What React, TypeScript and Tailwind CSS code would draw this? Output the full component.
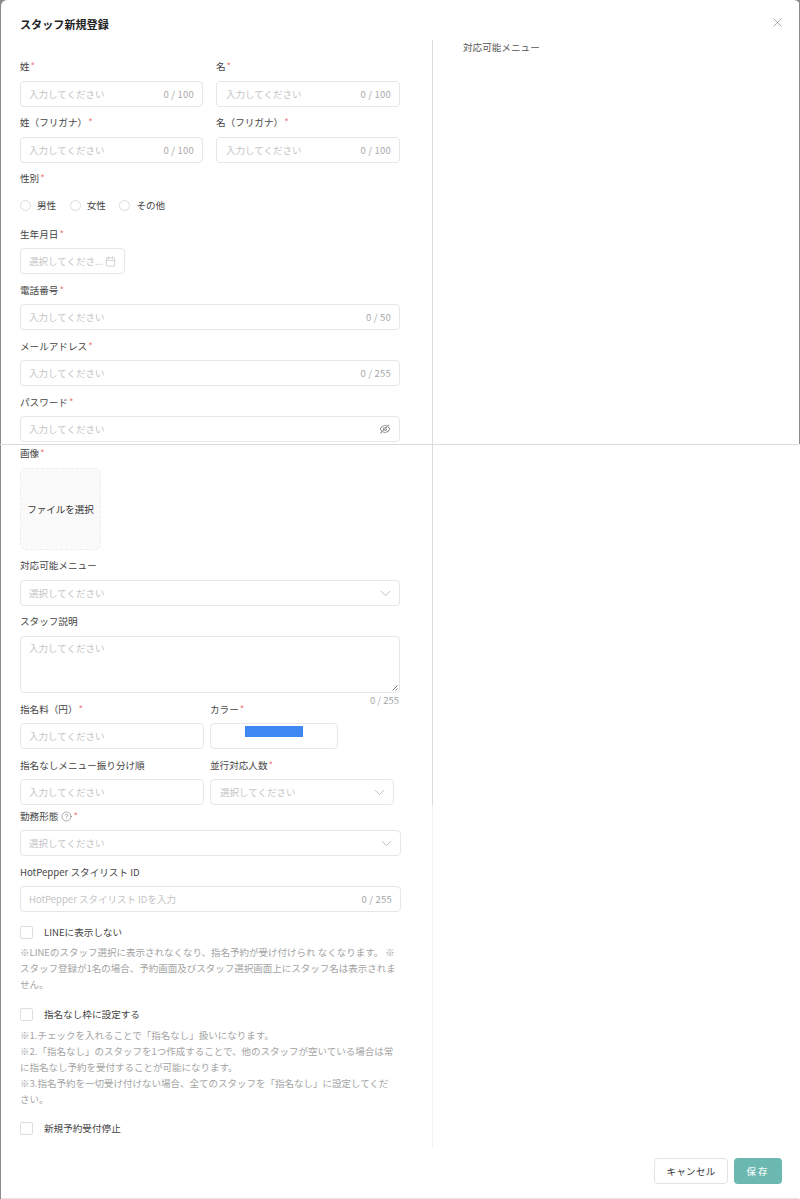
import { Calendar, ChevronDown, CircleHelp, X } from "lucide-react"
import { AiOutlineEyeInvisible } from "react-icons/ai"
import type { ReactNode } from "react"

const labelClass = "flex h-5 items-center text-[9.6px] text-[#444]"
const boxClass = "flex h-[26px] items-center rounded-[4px] border border-[#e6e6e6] bg-white pl-[8px] pr-2 text-[9.5px]"
const placeholderClass = "text-[#c4c4c4]"
const helpClass = "text-[9.5px] leading-[16px] text-[#a3a3a3]"

function Star() {
    return <span className="ml-px text-[#f28080]">*</span>
}

function Label({ text, required }: { text: ReactNode; required?: boolean }) {
    return (
        <div className={labelClass}>
            {text}
            {required && <Star />}
        </div>
    )
}

function TextBox({ placeholder = "入力してください", count, right, className = "" }: {
    placeholder?: string
    count?: string
    right?: ReactNode
    className?: string
}) {
    return (
        <div className={`${boxClass} ${className}`}>
            <span className={`truncate ${placeholderClass}`}>{placeholder}</span>
            {count && <span className="ml-auto tracking-[0.2px] text-[#a8a8a8]">{count}</span>}
            {right && <span className="ml-auto flex items-center text-[#adadad]">{right}</span>}
        </div>
    )
}

function Field({ label, required, className = "", boxClassName = "", ...box }: {
    label: ReactNode
    required?: boolean
    className?: string
    boxClassName?: string
    placeholder?: string
    count?: string
    right?: ReactNode
}) {
    return (
        <div className={`mb-[5px] ${className}`}>
            <Label text={label} required={required} />
            <TextBox {...box} className={`mt-[5px] ${boxClassName}`} />
        </div>
    )
}

function Radio({ text }: { text: string }) {
    return (
        <div className="flex items-center gap-[6px] text-[9.6px] text-[#444]">
            <span className="h-[11px] w-[11px] rounded-full border border-[#dcdcdc]" />
            {text}
        </div>
    )
}

function Check({ text, className = "" }: { text: string; className?: string }) {
    return (
        <div className={`flex h-[14px] items-center text-[9.6px] text-[#444] ${className}`}>
            <span className="mr-[11px] h-[13px] w-[13px] rounded-[2px] border border-[#dedede]" />
            {text}
        </div>
    )
}

const selectIcon = <ChevronDown size={17} strokeWidth={1.1} className="-mr-[3px]" />

export default function App() {
    return (
        <div className="relative h-[1199px] w-[800px] overflow-hidden bg-[#8a8a8a] pl-px font-['Noto_Sans_CJK_JP',sans-serif]">
            <div className="flex h-full flex-col rounded-t-[6px] border-b border-[#e5e5e5] bg-white">
                <div className="flex h-10 shrink-0 items-start justify-between pl-[19px] pr-[15px] pt-[15px]">
                    <h2 className="text-[11.1px] font-bold leading-[18px] text-[#222]">スタッフ新規登録</h2>
                    <X size={15} strokeWidth={1.1} className="text-[#808080]" />
                </div>

                <div className="flex flex-1">
                    {/* form column */}
                    <div className="h-[1108px] w-[432px] shrink-0 border-r border-[#f2f2f2] pl-[19px] pt-4">
                        <div className="w-[381px]">
                            <div className="grid grid-cols-[183px_184px] gap-x-[13px]">
                                <Field label="姓" required count="0 / 100" />
                                <Field label="名" required count="0 / 100" boxClassName="!pl-[9px]" />
                                <Field label="姓（フリガナ）" required count="0 / 100" />
                                <Field label="名（フリガナ）" required count="0 / 100" boxClassName="!pl-[9px]" />
                            </div>

                            <Label text="性別" required />
                            <div className="mb-[13px] mt-[11px] flex h-[12px] items-center gap-[13.5px]">
                                <Radio text="男性" />
                                <Radio text="女性" />
                                <Radio text="その他" />
                            </div>

                            <Field
                                label="生年月日"
                                required
                                placeholder="選択してくださ..."
                                right={<Calendar size={11} strokeWidth={1.1} />}
                                boxClassName="!mt-1 w-[105px] !pr-[8px]"
                                className="!mb-[6px]"
                            />
                            <Field label="電話番号" required count="0 / 50" boxClassName="!mt-1 w-[380px]" className="!mb-[6px]" />
                            <Field label="メールアドレス" required count="0 / 255" boxClassName="!mt-1 w-[380px]" className="!mb-[6px]" />
                            <Field
                                label="パスワード"
                                required
                                right={<AiOutlineEyeInvisible size={12} className="text-[#808080]" />}
                                boxClassName="!mt-1 w-[380px]"
                                className="!mb-[1px]"
                            />

                            <Label text="画像" required />
                            <div className="mb-[5px] mt-[5px] flex h-[82px] w-[81px] items-center justify-center rounded-[6px] border border-dashed border-[#ececec] bg-[#fafafa] text-[9.5px] text-[#333]">
                                ファイルを選択
                            </div>

                            <Field label="対応可能メニュー" placeholder="選択してください" right={selectIcon} boxClassName="w-[380px] !mt-[5px]" className="!mb-[5px]" />

                            <Label text="スタッフ説明" />
                            <div className="relative mt-[5px] h-[57px] w-[380px] rounded-[4px] border border-[#e6e6e6] pl-[8px] pt-[3px] text-[9.5px] leading-[16px]">
                                <span className={placeholderClass}>入力してください</span>
                                <svg viewBox="0 0 6 6" className="absolute bottom-px right-px h-[6px] w-[6px] stroke-[#555]" strokeWidth="0.8">
                                    <path d="M0.5 5.5 5.5 0.5M3.5 5.5 5.5 3.5" />
                                </svg>
                            </div>
                            <div className="h-[6px] w-[379px] text-right text-[9.5px] leading-[14px] text-[#a8a8a8]">0 / 255</div>

                            <div className="flex">
                                <Field label="指名料（円）" required boxClassName="!mt-[4px] w-[184px]" className="!mb-[6px]" />
                                <div className="mb-[6px] ml-[6px]">
                                    <Label text="カラー" required />
                                    <div className="mt-1 flex h-[26px] w-[128px] justify-center rounded-[4px] border border-[#e6e6e6] pt-[2px]">
                                        <div className="h-[11px] w-[58px] bg-[#3f87f2]" />
                                    </div>
                                </div>
                            </div>

                            <div className="mb-px flex">
                                <Field label="指名なしメニュー振り分け順" boxClassName="!mt-[4px] w-[184px]" className="!mb-0" />
                                <Field
                                    label="並行対応人数"
                                    required
                                    placeholder="選択してください"
                                    right={selectIcon}
                                    boxClassName="!mt-[4px] w-[184px] !pl-[9px]"
                                    className="!mb-0 ml-[6px]"
                                />
                            </div>

                            <Field
                                label={<>勤務形態<CircleHelp size={11} strokeWidth={1.1} className="ml-[3px] text-[#666]" /></>}
                                required
                                placeholder="選択してください"
                                right={selectIcon}
                                boxClassName="!mt-[4px] w-[381px]"
                                className="!mb-[6px]"
                            />
                            <Field
                                label="HotPepper スタイリスト ID"
                                placeholder="HotPepper スタイリスト IDを入力"
                                count="0 / 255"
                                boxClassName="!mt-[4px] w-[381px]"
                                className="!mb-[13px]"
                            />

                            <Check text="LINEに表示しない" />
                            <p className={`${helpClass} mt-[5px] w-[380px]`}>
                                ※LINEのスタッフ選択に表示されなくなり、指名予約が受け付けられ なくなります。 ※スタッフ登録が1名の場合、予約画面及びスタッフ選択画面上にスタッフ名は表示されません。
                            </p>

                            <Check text="指名なし枠に設定する" className="mt-[15px]" />
                            <p className={`${helpClass} mt-[6px] w-[380px]`}>
                                ※1.チェックを入れることで「指名なし」扱いになります。
                                <br />
                                ※2.「指名なし」のスタッフを1つ作成することで、他のスタッフが空いている場合は常に指名なし予約を受付することが可能になります。
                                <br />
                                ※3.指名予約を一切受け付けない場合、全てのスタッフを「指名なし」に設定してくだ
                                <br />
                                さい。
                            </p>

                            <Check text="新規予約受付停止" className="mt-[14px]" />
                        </div>
                    </div>

                    <div className="flex-1 pl-[30px]">
                        <div className="text-[9.6px] leading-[14px] text-[#555]">対応可能メニュー</div>
                    </div>
                </div>

                <div className="flex items-start justify-end gap-[6px] pr-[18px]">
                    <button className="mb-[14px] h-[26px] w-[74px] rounded-[4px] border border-[#e2e2e2] bg-white text-[9.5px] tracking-[0.3px] text-[#333]">
                        キャンセル
                    </button>
                    <button className="h-[26px] w-[48px] rounded-[4px] bg-[#6bb8b0] text-[9.5px] font-medium tracking-[2px] text-[#eef8f6]">
                        保存
                    </button>
                </div>
            </div>

            {/* seams that run over the panels */}
            <div className="absolute left-0 right-0 top-[444px] h-px bg-[#dcdcdc]" />
            <div className="absolute left-[432px] top-10 h-[765px] w-px bg-[#dddddd]" />
            <div className="absolute right-0 top-0 h-[444px] w-px bg-[#8a8a8a]" />
            <div className="absolute right-0 top-[444px] h-[755px] w-px bg-white" />
        </div>
    )
}
